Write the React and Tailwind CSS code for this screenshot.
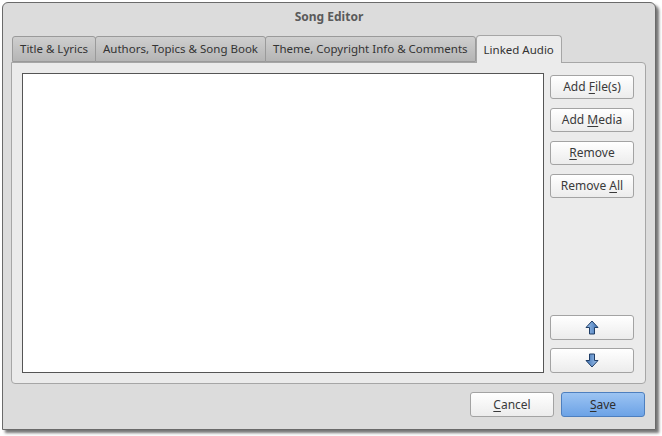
import React from 'react'

const font = { fontFamily: '"Noto Sans", "Open Sans", sans-serif' }

function Btn({ children, className = '' }) {
  return (
    <button
      className={`flex h-[24px] w-[84px] items-center justify-center rounded-[3px] border border-[#a3a3a3] bg-gradient-to-b from-[#ffffff] to-[#ececec] text-[12px] text-[#3a3a3a] ${className}`}
    >
      <span>{children}</span>
    </button>
  )
}

function U({ children }) {
  return <span className="underline underline-offset-2">{children}</span>
}

function Arrow({ down }) {
  return (
    <svg width="14" height="15" viewBox="0 0 14 15" className={down ? 'rotate-180' : ''}>
      <defs>
        <linearGradient id={down ? 'ad' : 'au'} x1="0" x2="1" y1="0" y2="0">
          <stop offset="0" stopColor="#9fc3ec" />
          <stop offset="1" stopColor="#3f72b4" />
        </linearGradient>
      </defs>
      <path
        d="M7 1 L13 7.5 L9.5 7.5 L9.5 14 L4.5 14 L4.5 7.5 L1 7.5 Z"
        fill={`url(#${down ? 'ad' : 'au'})`}
        stroke="#1f3d66"
        strokeWidth="1"
        strokeLinejoin="round"
      />
    </svg>
  )
}

function Tab({ label, active }) {
  if (active) {
    return (
      <div className="relative z-10 -mb-px flex h-[28px] items-center rounded-t-[4px] border border-b-0 border-[#a6a6a6] bg-[#ebebeb] px-[7px] text-[11.5px] text-[#333]">
        {label}
      </div>
    )
  }
  return (
    <div className="flex h-[26px] items-center rounded-t-[3px] border border-[#9a9a9a] bg-gradient-to-b from-[#cfcfcf] to-[#b5b5b5] px-[7px] text-[11.5px] text-[#333]">
      {label}
    </div>
  )
}

export default function App() {
  return (
    <div className="h-[436px] w-[662px] bg-white" style={font}>
      <div className="ml-[2px] mt-[2px] flex h-[428px] w-[654px] flex-col rounded-t-[6px] border border-[#6a6a6a] bg-[#dcdcdc] shadow-[3px_3px_3px_rgba(0,0,0,0.55)]">
        <div className="h-[32px] pt-[6px] text-center text-[12px] font-bold leading-[16px] text-[#5a5a5a]">
          Song Editor
        </div>

        <div className="ml-[8px] flex items-end pl-[1px]">
          <Tab label="Title & Lyrics" />
          <div className="-ml-px"><Tab label="Authors, Topics & Song Book" /></div>
          <div className="-ml-px"><Tab label="Theme, Copyright Info & Comments" /></div>
          <Tab label="Linked Audio" active />
        </div>

        <div className="ml-[8px] flex h-[322px] w-[635px] rounded-b-[4px] rounded-tr-[4px] border border-[#a6a6a6] bg-[#ebebeb] p-[10px]">
          <div className="h-full w-[522px] border border-[#555] bg-white" />
          <div className="ml-[6px] flex flex-col pt-[2px]">
            <div className="flex flex-col gap-[9px]">
              <Btn>Add <U>F</U>ile(s)</Btn>
              <Btn>Add <U>M</U>edia</Btn>
              <Btn><U>R</U>emove</Btn>
              <Btn>Remove <U>A</U>ll</Btn>
            </div>
            <div className="mt-auto flex flex-col gap-[8px]">
              <Btn className="h-[25px]"><Arrow /></Btn>
              <Btn className="h-[25px]"><Arrow down /></Btn>
            </div>
          </div>
        </div>

        <div className="mr-[10px] mt-[8px] flex justify-end gap-[7px]">
          <Btn className="h-[25px]"><U>C</U>ancel</Btn>
          <button className="flex h-[25px] w-[84px] items-center justify-center rounded-[3px] border border-[#4d7fbf] bg-gradient-to-b from-[#9cc4f2] to-[#6ca2e6] text-[12px] text-[#2f2f2f]">
            <span><U>S</U>ave</span>
          </button>
        </div>
      </div>
    </div>
  )
}
